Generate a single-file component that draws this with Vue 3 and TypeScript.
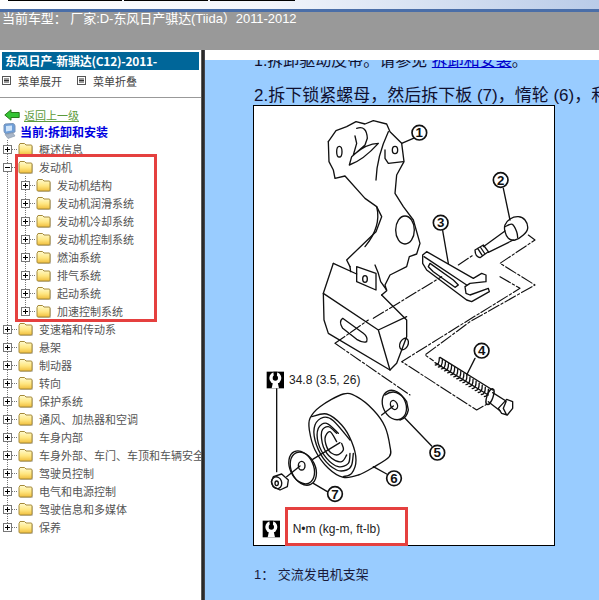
<script setup lang="ts">
interface Node { label: string; open?: boolean; children?: Node[] }
type Pt = [number, number]

const tree: Node[] = [
  { label: '概述信息' },
  {
    label: '发动机',
    open: true,
    children: ['发动机结构', '发动机润滑系统', '发动机冷却系统', '发动机控制系统', '燃油系统', '排气系统', '起动系统', '加速控制系统'].map((label) => ({ label })),
  },
  ...['变速箱和传动系', '悬架', '制动器', '转向', '保护系统', '通风、加热器和空调', '车身内部', '车身外部、车门、车顶和车辆安全', '驾驶员控制', '电气和电源控制', '驾驶信息和多媒体', '保养'].map((label) => ({ label })),
]

const callouts = [
  { n: '1', x: 508, y: 98 },
  { n: '2', x: 752, y: 240 },
  { n: '3', x: 572, y: 368 },
  { n: '4', x: 695, y: 752 },
  { n: '5', x: 562, y: 1058 },
  { n: '6', x: 432, y: 1135 },
  { n: '7', x: 255, y: 1182 },
]

const threads = Array.from({ length: 17 }, (_, i) => ({
  x: 560 + i * 9.2,
  y: 785 + i * 5.9,
}))

// Catmull-Rom through the traced points, so curved parts stay round.
function smooth(p: Pt[], closed = false): string {
  const at = (i: number): Pt =>
    closed ? p[(i + p.length) % p.length] : p[Math.max(0, Math.min(p.length - 1, i))]
  const n = closed ? p.length : p.length - 1
  let d = `M${p[0][0]} ${p[0][1]}`
  for (let i = 0; i < n; i++) {
    const [a, b, c, e] = [at(i - 1), at(i), at(i + 1), at(i + 2)]
    const c1 = [b[0] + (c[0] - a[0]) / 6, b[1] + (c[1] - a[1]) / 6]
    const c2 = [c[0] - (e[0] - b[0]) / 6, c[1] - (e[1] - b[1]) / 6]
    d += ` C${c1[0].toFixed(1)} ${c1[1].toFixed(1)} ${c2[0].toFixed(1)} ${c2[1].toFixed(1)} ${c[0]} ${c[1]}`
  }
  return closed ? d + ' Z' : d
}

const pulley = [
  smooth([[30, 85], [60, 50], [130, 12], [170, 20], [220, 60], [255, 110], [270, 170], [268, 200], [220, 232], [175, 255], [130, 262], [85, 235], [45, 180], [28, 120]], true),
  smooth([[35, 80], [80, 72], [125, 105], [155, 155], [168, 210], [155, 250], [130, 260]]),
  smooth([[150, 150], [100, 92], [70, 82], [45, 105], [45, 150], [70, 205], [110, 240], [140, 240], [155, 225], [160, 190]]),
  smooth([[115, 130], [80, 100], [55, 115], [55, 160], [80, 205], [115, 230], [145, 220], [150, 190]]),
  smooth([[110, 130], [85, 110], [65, 125], [70, 170], [95, 205], [125, 215], [140, 195]]),
  smooth([[110, 155], [90, 125], [75, 145], [85, 180], [110, 195], [130, 180], [125, 160]]),
]
const boltHead = [
  smooth([[240, 30], [255, 12], [280, 5], [300, 15], [308, 40], [295, 60], [270, 75], [250, 70], [240, 50]], true),
  smooth([[240, 35], [262, 28], [275, 50], [278, 68]]),
]
</script>

<template>
  <div class="page">
    <svg class="defs" width="0" height="0" aria-hidden="true">
      <defs>
        <linearGradient id="folderFill" x1="0" y1="0" x2="0" y2="1">
          <stop offset="0" stop-color="#fffbd0" />
          <stop offset="0.55" stop-color="#ffe680" />
          <stop offset="1" stop-color="#f0bd3c" />
        </linearGradient>
      </defs>
    </svg>

    <div class="topbar">
      <span class="seg seg-a"></span>
      <span class="seg seg-b"></span>
      <span class="seg seg-c"></span>
    </div>
    <header class="header">当前车型：&nbsp;厂家:D-东风日产骐达(Tiida）2011-2012</header>

    <main class="main">
      <aside class="side">
        <div class="brand">东风日产-新骐达(C12)-2011-</div>
        <div class="menu-actions">
          <span class="action" v-for="t in ['菜单展开', '菜单折叠']" :key="t">
            <svg width="9" height="9" viewBox="0 0 9 9">
              <rect x="0.5" y="0.5" width="8" height="8" fill="#fff" stroke="#555" />
              <path d="M2 3h5M2 4.5h5M2 6h5" stroke="#333" />
            </svg>
            {{ t }}
          </span>
        </div>
        <a class="back">
          <svg width="16" height="12" viewBox="0 0 16 12">
            <path d="M0.8 6 L7 0.8 V3.5 H15.2 V8.5 H7 V11.2 Z" fill="#35c435" stroke="#2a7a1e" />
          </svg>
          <span>返回上一级</span>
        </a>
        <div class="current">
          <svg width="13" height="16" viewBox="0 0 13 16">
            <path d="M2 1 L10 0.5 Q12 1 12 3 V9 L3 11 Q1 10 1 8 V2 Z" fill="#6f9fd8" stroke="#7a94b8" />
            <path d="M3 3 L9 2.5 V7.5 L3 8.5 Z" fill="#cfe4fa" />
            <path d="M2 11.5 L10 10 L12 13 L5 15.5 Z" fill="#a9b6c8" stroke="#8393a8" stroke-width="0.6" />
          </svg>
          <span>当前:拆卸和安装</span>
        </div>

        <ul class="tree">
          <li v-for="node in tree" :key="node.label">
            <div class="row">
              <svg class="twist" width="9" height="9" viewBox="0 0 9 9">
                <rect x="0.5" y="0.5" width="8" height="8" fill="#fff" stroke="#777" />
                <path :d="node.open ? 'M2 4.5h5' : 'M2 4.5h5M4.5 2v5'" stroke="#000" />
              </svg>
              <span class="dots"></span>
              <svg class="folder" width="15" height="14" viewBox="0 0 15 14">
                <path d="M2.5 5 V3.5 L4 2.5 H8 L9.5 4 H14 Q15 4 15 5 V13 Q15 14 14 14 H3 Q2 14 2 13 Z" fill="#c9c9c9" />
                <path d="M1 3.5 L2 1.5 H6.5 L8 3 H13 Q14 3 14 4 V12 Q14 13 13 13 H2 Q1 13 1 12 Z" fill="url(#folderFill)" stroke="#a58a3a" />
              </svg>
              <span class="label">{{ node.label }}</span>
            </div>
            <ul v-if="node.children" class="subtree">
              <li v-for="c in node.children" :key="c.label">
                <div class="row">
                  <svg class="twist" width="9" height="9" viewBox="0 0 9 9">
                    <rect x="0.5" y="0.5" width="8" height="8" fill="#fff" stroke="#777" />
                    <path d="M2 4.5h5M4.5 2v5" stroke="#000" />
                  </svg>
                  <span class="dots"></span>
                  <svg class="folder" width="15" height="14" viewBox="0 0 15 14">
                    <path d="M2.5 5 V3.5 L4 2.5 H8 L9.5 4 H14 Q15 4 15 5 V13 Q15 14 14 14 H3 Q2 14 2 13 Z" fill="#c9c9c9" />
                    <path d="M1 3.5 L2 1.5 H6.5 L8 3 H13 Q14 3 14 4 V12 Q14 13 13 13 H2 Q1 13 1 12 Z" fill="url(#folderFill)" stroke="#a58a3a" />
                  </svg>
                  <span class="label">{{ c.label }}</span>
                </div>
              </li>
            </ul>
          </li>
        </ul>
        <div class="mark mark-tree"></div>
      </aside>

      <div class="divider"></div>

      <section class="content">
        <div class="blue">
          <div class="doc">
            <p class="step1">1.拆卸驱动皮带。请参见 <a>拆卸和安装</a>。</p>
            <p class="step2">2.拆下锁紧螺母，然后拆下板 (7)，惰轮 (6)，和</p>
            <div class="figure">
              <svg class="art" width="302" height="441" viewBox="0 0 906 1323">
                <g transform="translate(-9 -15)" fill="none" stroke="#111" stroke-width="4" stroke-linejoin="round" stroke-linecap="round">
                  <!-- bracket 1 -->
                  <path d="M235 125 L258 92 L290 80 L318 65 L345 72 L370 62 L410 72 L420 95 L455 130 L462 185 L440 225 L435 280 L460 320 L490 360 L510 430 L500 462 L478 470 L470 500 L420 525 L405 555 L410 572 L395 585" />
                  <path d="M235 125 L237 185 L250 210 L255 235 L285 228 L345 295 L380 320 L395 350 L378 395 L290 480 L300 500" />
                  <path d="M320 85 Q350 75 352 115 L345 135 L305 170 L298 195 Q340 180 385 130 Q350 130 310 165 L320 130 L315 108" />
                  <ellipse cx="268" cy="155" rx="8" ry="16" />
                  <ellipse cx="435" cy="150" rx="8" ry="11" />
                  <path d="M378 240 Q380 170 415 95" />
                  <path d="M405 150 L405 175 L415 190 L460 185" />
                  <path d="M380 320 Q395 380 345 440" />
                  <ellipse cx="465" cy="390" rx="28" ry="42" />
                  <path d="M320 500 L378 520 L378 570 L320 545 Z" />
                  <ellipse cx="345" cy="537" rx="7" ry="10" />
                  <path d="M375 495 L385 520 L392 545 L410 570" />

                  <!-- engine block -->
                  <path d="M250 490 L220 580 L222 660 L235 700 L420 810 L440 790 L470 710 L470 660 L440 630 L395 585" />
                  <path d="M250 490 L320 522 M220 580 L385 690 L420 810 M385 690 L470 650 M300 500 L302 515" />
                  <path d="M278 655 L340 700 Q355 712 350 725 Q340 730 320 718 L278 685 Q265 665 278 655 Z" />
                  <ellipse cx="462" cy="732" rx="12" ry="18" transform="rotate(25 462 732)" />

                  <!-- bolt 2 -->
                  <g transform="translate(525 345)">
                    <path v-for="(d, i) in boltHead" :key="i" :d="d" />
                    <path d="M240 48 L175 95 M265 75 L190 112" />
                    <path d="M150 105 L175 90 L190 110 L165 128 Q150 125 150 105 Z M158 100 L172 122 M166 96 L180 117" />
                  </g>
                  <path d="M760 265 L780 360 M455 130 L490 115 M578 392 L595 490" />

                  <!-- plate 3 -->
                  <path d="M530 455 L670 535 L695 520 L708 525 L708 545 L660 550 L645 560 L648 580 L660 585 L715 565 L718 575 L665 605 L650 600 L530 510 L518 490 L518 465 Z" />
                  <path d="M540 490 L610 540 L625 555 L615 562 L550 515 L535 500 Z" />
                  <path d="M522 470 L650 555" />

                  <!-- centre lines -->
                  <g stroke-dasharray="36 7 7 7" stroke-width="3.4">
                    <path d="M370 655 L575 530" />
                    <path d="M625 495 L670 465" />
                    <path d="M835 405 L855 420 L750 490 L855 555 L660 665 L525 765 L550 782" />
                    <path d="M750 530 L810 565 L640 670 L455 785 L680 930 L715 910" />
                    <path d="M255 730 L355 660 M255 730 L480 885" />
                  </g>

                  <!-- bolt 4 -->
                  <path d="M555 788 L715 885 M570 772 L728 870" />
                  <path v-for="(t, i) in threads" :key="i" :d="`M${t.x - 4} ${t.y + 10} Q${t.x + 8} ${t.y + 10} ${t.x + 8} ${t.y - 12}`" />
                  <ellipse cx="720" cy="890" rx="9" ry="25" transform="rotate(20 720 890)" />
                  <path d="M728 878 L768 903 M715 905 L750 932" />
                  <path d="M770 898 L788 905 L788 925 L772 945 L755 940 L745 925 Z M768 905 L760 925 L770 945" />
                  <path d="M675 775 L650 825" />

                  <!-- washer 5 -->
                  <ellipse cx="433" cy="915" rx="34" ry="46" transform="rotate(-25 433 915)" />
                  <path d="M405 885 Q440 860 470 905 L475 930 Q470 955 450 960" />
                  <ellipse cx="432" cy="915" rx="10" ry="14" transform="rotate(-25 432 915)" />
                  <path d="M395 945 L430 918 M465 955 L545 1038" />

                  <!-- pulley 6 -->
                  <g transform="translate(150 870)">
                    <path v-for="(d, i) in pulley" :key="i" :d="d" />
                    <path d="M38 208 L120 158" />
                  </g>
                  <path d="M370 1100 L410 1122" />

                  <!-- washer 7 -->
                  <ellipse cx="155" cy="1102" rx="35" ry="52" transform="rotate(-25 155 1102)" />
                  <ellipse cx="160" cy="1106" rx="36" ry="52" transform="rotate(-25 160 1106)" />
                  <ellipse cx="155" cy="1097" rx="10" ry="13" />
                  <path d="M190 1150 L232 1175" />

                  <!-- nut -->
                  <path d="M70 1130 L95 1122 L115 1140 L112 1160 L90 1170 L70 1160 L64 1145 Z" />
                  <ellipse cx="80" cy="1148" rx="15" ry="18" transform="rotate(-20 80 1148)" />
                  <ellipse cx="80" cy="1150" rx="5" ry="7" />
                  <path d="M110 1130 L150 1098 M80 865 L80 1115" />

                  <!-- callouts -->
                  <g v-for="c in callouts" :key="c.n">
                    <circle :cx="c.x" :cy="c.y" r="22" fill="#fff" stroke-width="5" />
                    <text :x="c.x" :y="c.y + 14" class="num">{{ c.n }}</text>
                  </g>

                  <!-- torque symbols -->
                  <g v-for="(o, i) in [[50, 815], [38, 1262]]" :key="i" :transform="`translate(${o[0]} ${o[1]})`" stroke="none">
                    <rect width="52" height="50" fill="#000" />
                    <circle cx="26" cy="19" r="18" fill="#fff" />
                    <circle cx="26" cy="19" r="8" fill="#000" />
                    <path d="M20 0 H32 L30 19 H22 Z" fill="#000" />
                    <path d="M19 32 H33 L37 50 H15 Z" fill="#fff" />
                  </g>
                  <text x="117" y="852" class="cap">34.8 (3.5, 26)</text>
                  <text x="128" y="1300" class="cap">N•m (kg-m, ft-lb)</text>
                </g>
              </svg>
              <div class="mark mark-fig"></div>
            </div>
            <p class="caption">1：&nbsp;交流发电机支架</p>
          </div>
        </div>
      </section>
    </main>
  </div>
</template>

<style scoped>
.page {
  width: 599px;
  height: 600px;
  overflow: hidden;
  display: flex;
  flex-direction: column;
  background: #fff;
  font-family: "Liberation Sans", "Noto Sans CJK SC", sans-serif;
}
.defs {
  position: absolute;
}
.topbar {
  flex: none;
  height: 9px;
  display: flex;
  align-items: flex-start;
  padding-left: 8px;
  gap: 2px;
  background: linear-gradient(to right, #fff 0%, #f2f5fb 45%, #b9cbe8 100%);
  border-bottom: 3px solid #4a6ea8;
}
.seg {
  height: 1px;
  background: #000;
}
.seg-a { width: 114px; }
.seg-b { width: 84px; }
.seg-c { width: 85px; }
.header {
  flex: none;
  height: 38px;
  box-sizing: border-box;
  padding: 0 0 0 2px;
  background: #999;
  color: #fff;
  font-size: 13px;
  line-height: 14px;
  letter-spacing: -0.05px;
  white-space: nowrap;
}
.main {
  flex: 1;
  min-height: 0;
  display: flex;
}
.side {
  position: relative;
  flex: none;
  width: 201px;
  overflow: hidden;
  background: #fff;
  font-family: "Noto Sans CJK SC", sans-serif;
}
.brand {
  margin: 2px 2px 0;
  height: 18px;
  padding-left: 3px;
  background: #006699;
  color: #fff;
  font-size: 12px;
  font-weight: 700;
  letter-spacing: -0.25px;
  line-height: 18px;
  white-space: nowrap;
}
.menu-actions {
  height: 28px;
  box-sizing: border-box;
  display: flex;
  align-items: center;
  gap: 15px;
  padding: 0 0 6px 2px;
  border-bottom: 1px solid #999;
}
.action {
  display: flex;
  align-items: center;
  gap: 7px;
  color: #444;
  font-size: 11px;
}
.back {
  display: flex;
  align-items: center;
  gap: 4px;
  height: 18px;
  margin-top: 8px;
  padding-left: 4px;
  color: #5c9a3c;
  font-size: 11px;
  text-decoration: none;
}
.back span {
  text-decoration: underline;
}
.current {
  display: flex;
  align-items: center;
  gap: 4px;
  height: 16px;
  margin-top: -1px;
  padding-left: 3px;
  color: #0000e0;
  font-size: 12px;
  font-weight: 700;
}
.tree {
  list-style: none;
  margin: 1px 0 0;
  padding: 0;
  background-image: repeating-linear-gradient(to bottom, #777 0 1px, transparent 1px 2px);
  background-size: 1px calc(100% - 9px);
  background-position: 7px 0;
  background-repeat: no-repeat;
}
.subtree {
  list-style: none;
  margin: 0;
  padding: 0 0 0 18px;
  background-image: repeating-linear-gradient(to bottom, #777 0 1px, transparent 1px 2px);
  background-size: 1px calc(100% - 9px);
  background-position: 25px 0;
  background-repeat: no-repeat;
}
.row {
  height: 18px;
  display: flex;
  align-items: center;
  padding-left: 3px;
  white-space: nowrap;
}
.twist,
.folder {
  flex: none;
}
.dots {
  flex: none;
  width: 6px;
  height: 1px;
  background-image: repeating-linear-gradient(to right, #777 0 1px, transparent 1px 2px);
}
.label {
  margin-left: 6px;
  color: #555;
  font-size: 11px;
  line-height: 18px;
}
.mark {
  position: absolute;
  box-sizing: border-box;
  border: 3px solid #e5403f;
  pointer-events: none;
}
.mark-tree {
  left: 15px;
  top: 104px;
  width: 142px;
  height: 168px;
}
.divider {
  flex: none;
  width: 4px;
  background: linear-gradient(to right, #777, #222 40%, #333 80%, #667);
}
.content {
  flex: 1;
  min-width: 0;
  padding-top: 10px;
  display: flex;
  overflow: hidden;
}
.blue {
  flex: 1;
  min-width: 0;
  background: #99ccff;
  overflow: hidden;
}
.doc {
  margin-top: -7px;
  padding-left: 49px;
  width: 600px;
  color: #101030;
}
.step1 {
  margin: 0;
  font-size: 16px;
  line-height: 16px;
  white-space: nowrap;
}
.step1 a {
  color: #0000cc;
  text-decoration: underline;
}
.step2 {
  margin: 18px 0 0;
  font-size: 17px;
  line-height: 18px;
  white-space: nowrap;
}
.figure {
  position: relative;
  width: 302px;
  height: 441px;
  margin: 0 0 0 -1px;
  box-sizing: border-box;
  border: 1px solid #000;
  background: #fff;
}
.art {
  display: block;
  margin: -1px;
}
.num {
  font-family: "Liberation Sans", sans-serif;
  font-size: 40px;
  font-weight: 700;
  text-anchor: middle;
  fill: #111;
  stroke: none;
}
.cap {
  font-family: "Liberation Sans", sans-serif;
  font-size: 36px;
  fill: #222;
  stroke: none;
}
.mark-fig {
  left: 31px;
  top: 401px;
  width: 123px;
  height: 39px;
}
.caption {
  margin: 19px 0 0;
  font-size: 13px;
  line-height: 20px;
  color: #1a1a3a;
}
</style>

<style>
html, body {
  margin: 0;
  background: #fff;
}
</style>
